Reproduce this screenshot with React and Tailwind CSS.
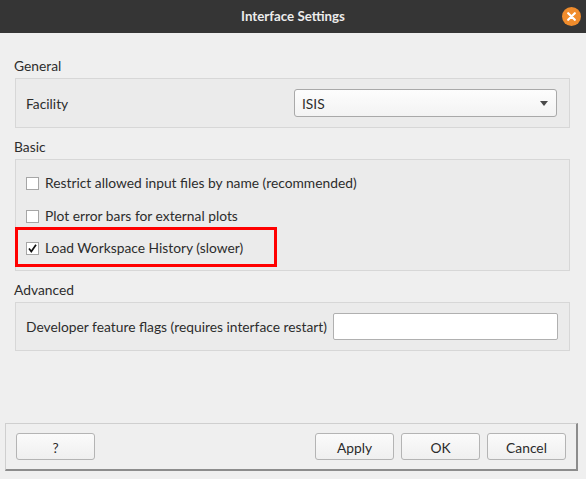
import React from "react";

function Checkbox({ checked }) {
  return (
    <div className="w-[13px] h-[13px] bg-white border border-[#a6a6a6] flex items-center justify-center shrink-0">
      {checked && (
        <svg width="11" height="11" viewBox="0 0 11 11">
          <path d="M2 5.5 L4.3 8.5 L9 1.8" fill="none" stroke="#111" strokeWidth="1.7" />
        </svg>
      )}
    </div>
  );
}

function Button({ children, className = "" }) {
  return (
    <div
      className={
        "w-[79px] h-[27px] rounded-[3px] border border-[#b4b4b4] bg-gradient-to-b from-[#fbfbfb] to-[#efefef] flex items-center justify-center text-[13.8px] leading-[16px] pt-[2px] text-[#2b2b2b] " +
        className
      }
    >
      {children}
    </div>
  );
}

export default function App() {
  return (
    <div
      className="w-[586px] h-[479px] bg-[#efefef] flex flex-col text-[#2d2d2d] overflow-hidden"
      style={{ fontFamily: "Lato, 'Noto Sans', sans-serif" }}
    >
      {/* Title bar */}
      <div className="h-[33px] bg-[#353535] grid grid-cols-[1fr_auto_1fr] items-center shrink-0">
        <div />
        <div className="text-[13.3px] font-bold text-[#ececec] pt-[1px]">Interface Settings</div>
        <div className="flex justify-end pr-[5px]">
          <div className="w-[19px] h-[19px] rounded-full bg-[#f08c2c] flex items-center justify-center">
            <svg width="9" height="9" viewBox="0 0 9 9">
              <path d="M1.2 1.2 L7.8 7.8 M7.8 1.2 L1.2 7.8" stroke="#fff" strokeWidth="2.2" strokeLinecap="round" />
            </svg>
          </div>
        </div>
      </div>

      {/* Content */}
      <div className="flex flex-col pl-[14px] pr-[16px] pt-[25px] text-[13.8px]">
        <div className="h-[16px] leading-[16px]">General</div>
        <div className="mt-[4px] ml-[1px] h-[50px] border border-[#d7d7d7] bg-[#ebebeb] flex items-center pl-[10px] pr-[12px]">
          <div className="flex-1 pt-[2px]">Facility</div>
          <div className="w-[263px] h-[28px] rounded-[3px] border border-[#a9a9a9] bg-gradient-to-b from-[#fdfdfd] to-[#f3f3f3] flex items-center pl-[7px] pr-[8px]">
            <div className="flex-1 pt-[2px]">ISIS</div>
            <svg width="8" height="5" viewBox="0 0 8 5">
              <path d="M0 0 L8 0 L4 5 Z" fill="#4a4a4a" />
            </svg>
          </div>
        </div>

        <div className="mt-[11px] h-[16px] leading-[16px]">Basic</div>
        <div className="mt-[4px] ml-[1px] h-[112px] border border-[#d7d7d7] bg-[#ebebeb] flex flex-col pl-[10px] pt-[16px]">
          <div className="h-[14px] flex items-center gap-[6px]">
            <Checkbox />
            <span className="pt-[1px]">Restrict allowed input files by name (recommended)</span>
          </div>
          <div className="mt-[19px] h-[14px] flex items-center gap-[6px]">
            <Checkbox />
            <span className="pt-[1px]">Plot error bars for external plots</span>
          </div>
          <div className="mt-[18px] h-[14px] flex items-center gap-[6px] relative">
            <Checkbox checked />
            <span className="pt-[1px]">Load Workspace History (slower)</span>
            <div className="absolute left-[-11px] top-[-14px] w-[262px] h-[40px] border-[3px] border-[#ff0000]" />
          </div>
        </div>

        <div className="mt-[11px] h-[16px] leading-[16px]">Advanced</div>
        <div className="mt-[4px] ml-[1px] h-[49px] border border-[#d7d7d7] bg-[#ebebeb] flex items-center pl-[10px] pr-[12px]">
          <div className="flex-1 pt-[2px] pr-[6px] whitespace-nowrap">Developer feature flags (requires interface restart)</div>
          <div className="w-[225px] h-[27px] rounded-[2px] border border-[#b0b0b0] bg-white shrink-0" />
        </div>
      </div>

      <div className="flex-1" />

      {/* Bottom button panel */}
      <div className="mx-[5px] mr-[8px] mb-[8px] h-[48px] border border-[#cfcfcf] border-r-[#8c8c8c] border-b-[#8c8c8c] border-b-[2px] border-r-[2px] bg-[#efefef] flex items-center pl-[10px] pr-[10px]">
        <Button>?</Button>
        <div className="flex-1" />
        <div className="flex gap-[7px]">
          <Button>Apply</Button>
          <Button>OK</Button>
          <Button>Cancel</Button>
        </div>
      </div>
    </div>
  );
}
